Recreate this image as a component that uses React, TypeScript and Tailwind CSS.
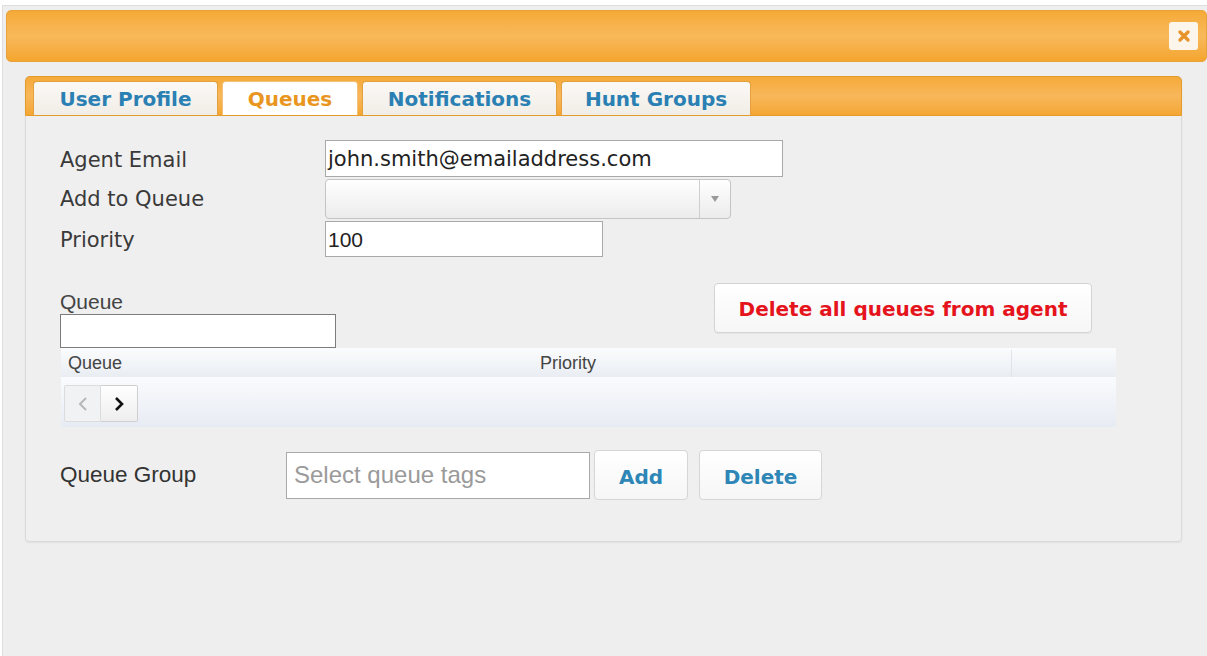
import React from "react";

const tahoma = { fontFamily: '"DejaVu Sans", Verdana, sans-serif' };
const arial = { fontFamily: '"Liberation Sans", Arial, sans-serif' };

function Tab({ label, active, width }: { label: string; active?: boolean; width: string }) {
  return (
    <div
      className={
        "h-[34px] flex items-center justify-center rounded-t-[4px] border border-b-0 text-[20px] font-bold " +
        width +
        (active
          ? " bg-white border-[#f2c27a] text-[#e8961f]"
          : " bg-gradient-to-b from-[#fbf9f6] to-[#f1ede7] border-[#e2a13e] text-[#2b80b3]")
      }
      style={tahoma}
    >
      {label}
    </div>
  );
}

function Label({ children, className = "" }: { children: React.ReactNode; className?: string }) {
  return (
    <div className={"text-[21px] text-[#3a3a3a] leading-none " + className} style={tahoma}>
      {children}
    </div>
  );
}

export default function App() {
  return (
    <div className="w-[1207px] h-[656px] bg-white overflow-hidden">
      <div className="mt-[5px] ml-[2px] h-[651px] border-t border-l border-[#dedede] bg-[#eeeeee] pt-[4px] pl-[3px]">
        {/* dialog title bar */}
        <div className="h-[52px] rounded-[5px] border border-[#eaa23a] bg-gradient-to-b from-[#f5aa36] via-[#f8b95a] to-[#f4a52c] flex items-center justify-end pr-[8px]">
          <div className="w-[29px] h-[28px] rounded-[3px] bg-[#fbf5ec] flex items-center justify-center">
            <svg width="12" height="12" viewBox="0 0 12 12">
              <path d="M2 2 L10 10 M10 2 L2 10" stroke="#e8922a" strokeWidth="3.2" strokeLinecap="round" />
            </svg>
          </div>
        </div>

        {/* tabbed panel */}
        <div className="ml-[19px] mt-[14px] w-[1157px] h-[466px] rounded-[4px] border border-[#dadada] bg-[#efefef] shadow-[0_1px_2px_rgba(0,0,0,0.06)]">
          <div className="h-[40px] rounded-t-[5px] border border-[#e59b2a] bg-gradient-to-b from-[#f5aa38] via-[#f8b75a] to-[#f4a631] flex items-end gap-[4px] pl-[7px] -mx-px -mt-px">
            <Tab label="User Profile" width="w-[185px]" />
            <Tab label="Queues" active width="w-[136px]" />
            <Tab label="Notifications" width="w-[195px]" />
            <Tab label="Hunt Groups" width="w-[190px]" />
          </div>

          <div className="pl-[34px] pt-[24px]">
            {/* agent fields */}
            <div className="flex flex-col gap-[2px]">
              <div className="flex items-center">
                <Label className="w-[265px] pt-[4px]">Agent Email</Label>
                <div
                  className="w-[458px] h-[37px] border border-[#a9a9a9] bg-white flex items-center px-[2px] pt-[2px] text-[21px] text-[#222]"
                  style={tahoma}
                >
                  john.smith@emailaddress.com
                </div>
              </div>
              <div className="flex items-center">
                <Label className="w-[265px]">Add to Queue</Label>
                <div className="w-[406px] h-[40px] rounded-[4px] border border-[#c4c4c4] bg-gradient-to-b from-white to-[#ececec] flex">
                  <div className="flex-1" />
                  <div className="w-[31px] border-l border-[#cfcfcf] flex items-center justify-center">
                    <svg width="8" height="6" viewBox="0 0 8 6">
                      <path d="M0 0 L8 0 L4 6 Z" fill="#9a9a9a" />
                    </svg>
                  </div>
                </div>
              </div>
              <div className="flex items-center">
                <Label className="w-[265px] pt-[3px]">Priority</Label>
                <div
                  className="w-[278px] h-[36px] border border-[#a9a9a9] bg-white flex items-center px-[2px] pt-[2px] text-[21px] text-[#222]"
                  style={arial}
                >
                  100
                </div>
              </div>
            </div>

            {/* queue filter and bulk delete */}
            <div className="mt-[26px] flex">
              <div className="w-[654px]">
                <div className="mt-[7px] h-[24px] text-[21px] leading-[24px] text-[#444]" style={arial}>
                  Queue
                </div>
                <div className="w-[276px] h-[34px] border border-[#7c7c7c] bg-white" />
              </div>
              <div
                className="w-[378px] h-[50px] rounded-[4px] border border-[#d4d4d4] bg-gradient-to-b from-white to-[#f6f6f6] flex items-center justify-center pt-[2px] text-[20px] font-bold text-[#e5141c] shadow-[0_1px_1px_rgba(0,0,0,0.05)]"
                style={tahoma}
              >
                Delete all queues from agent
              </div>
            </div>

            {/* queue grid */}
            <div className="ml-px w-[1055px]">
              <div className="h-[29px] flex bg-gradient-to-b from-[#fbfcfd] to-[#e9edf3] pt-[2px] text-[18px] text-[#444]" style={arial}>
                <div className="w-[472px] pl-[7px] flex items-center">Queue</div>
                <div className="w-[479px] pl-[7px] flex items-center border-r border-[#e0e3e8]">Priority</div>
                <div className="flex-1" />
              </div>
              <div className="h-[50px] bg-gradient-to-b from-[#fafbfd] to-[#e7ebf3] pl-[3px] pt-[8px]">
                <div className="flex h-[37px] w-[74px]">
                  <div className="w-[37px] h-full border border-[#dcdcdc] bg-[#f1f2f4] flex items-center justify-center rounded-l-[2px]">
                    <svg width="10" height="16" viewBox="0 0 10 16">
                      <path d="M8 2 L2 8 L8 14" stroke="#b8b8b8" strokeWidth="2" fill="none" />
                    </svg>
                  </div>
                  <div className="w-[37px] h-full border border-l-0 border-[#cfcfcf] bg-gradient-to-b from-white to-[#eeeeee] flex items-center justify-center rounded-r-[2px]">
                    <svg width="10" height="16" viewBox="0 0 10 16">
                      <path d="M2 2 L8 8 L2 14" stroke="#111" strokeWidth="2.6" fill="none" />
                    </svg>
                  </div>
                </div>
              </div>
            </div>

            {/* queue group tags */}
            <div className="mt-[23px] flex items-center">
              <div className="w-[226px] text-[22.5px] text-[#333]" style={arial}>
                Queue Group
              </div>
              <div
                className="w-[304px] h-[47px] border border-[#a9a9a9] bg-white flex items-center pl-[7px] text-[24px] text-[#9a9a9a]"
                style={arial}
              >
                Select queue tags
              </div>
              <div
                className="ml-[4px] w-[94px] h-[50px] rounded-[4px] border border-[#d6d6d6] bg-gradient-to-b from-white to-[#f6f6f6] flex items-center justify-center pt-[3px] text-[20px] font-bold text-[#2d86b6]"
                style={tahoma}
              >
                Add
              </div>
              <div
                className="ml-[11px] w-[123px] h-[50px] rounded-[4px] border border-[#d6d6d6] bg-gradient-to-b from-white to-[#f6f6f6] flex items-center justify-center pt-[3px] text-[20px] font-bold text-[#2d86b6]"
                style={tahoma}
              >
                Delete
              </div>
            </div>
          </div>
        </div>
      </div>
    </div>
  );
}
